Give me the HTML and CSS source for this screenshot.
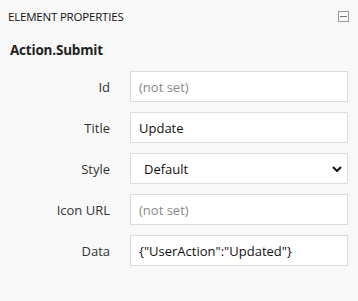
FILE: index.html
```html
<!DOCTYPE html>
<html>
<head>
<meta charset="utf-8">
<link rel="stylesheet" href="styles.css">
</head>
<body>
<div class="panel">
  <div class="header">
    <span class="header-title">ELEMENT PROPERTIES</span>
    <span class="collapse"><span class="minus"></span></span>
  </div>
  <div class="element-name">Action.Submit</div>
  <div class="props">
    <label class="label">Id</label>
    <input class="field" type="text" placeholder="(not set)">
    <label class="label">Title</label>
    <input class="field" type="text" value="Update">
    <label class="label">Style</label>
    <div class="select">
      <span class="select-text">Default</span>
      <svg class="chevron" width="10" height="6" viewBox="0 0 10 6"><path d="M1 1 L5 5 L9 1" fill="none" stroke="#111" stroke-width="2"/></svg>
    </div>
    <label class="label">Icon URL</label>
    <input class="field" type="text" placeholder="(not set)">
    <label class="label">Data</label>
    <input class="field" type="text" value='{"UserAction":"Updated"}'>
  </div>
</div>
</body>
</html>
```
FILE: styles.css
```css
html, body {
  margin: 0;
  padding: 0;
  background: #f8f8f8;
}
body {
  font-family: "Open Sans", "Noto Sans", sans-serif;
  color: #222;
  width: 358px;
  height: 301px;
  overflow: hidden;
}
.panel {
  display: flex;
  flex-direction: column;
}
.header {
  display: flex;
  align-items: center;
  justify-content: space-between;
  height: 32px;
  padding: 0 9px 0 8px;
}
.header-title {
  font-size: 11.5px;
  color: #111;
  letter-spacing: -0.2px;
}
.collapse {
  width: 9px;
  height: 9px;
  border: 1px solid #999;
  display: flex;
  align-items: center;
  justify-content: center;
}
.minus {
  width: 7px;
  height: 1px;
  background: #777;
}
.element-name {
  font-weight: bold;
  font-size: 13.5px;
  padding: 9px 0 0 10px;
  height: 30px;
  box-sizing: border-box;
  color: #222;
  letter-spacing: -0.2px;
}
.props {
  display: grid;
  grid-template-columns: 110px 218px;
  column-gap: 20px;
  row-gap: 10px;
  padding-top: 9px;
  align-items: center;
}
.label {
  text-align: right;
  font-size: 13px;
  color: #333;
}
.field, .select {
  box-sizing: border-box;
  height: 31px;
  width: 218px;
  border: 1px solid #dcdcdc;
  background: #fff;
  font-family: "Open Sans", "Noto Sans", sans-serif;
  font-size: 13px;
  color: #111;
  padding: 0 8px;
  margin: 0;
  outline: none;
}
.field::placeholder {
  color: #888;
}
.select {
  display: flex;
  align-items: center;
  justify-content: space-between;
  padding: 0 5px 0 13px;
}
.chevron {
  display: block;
}
```
